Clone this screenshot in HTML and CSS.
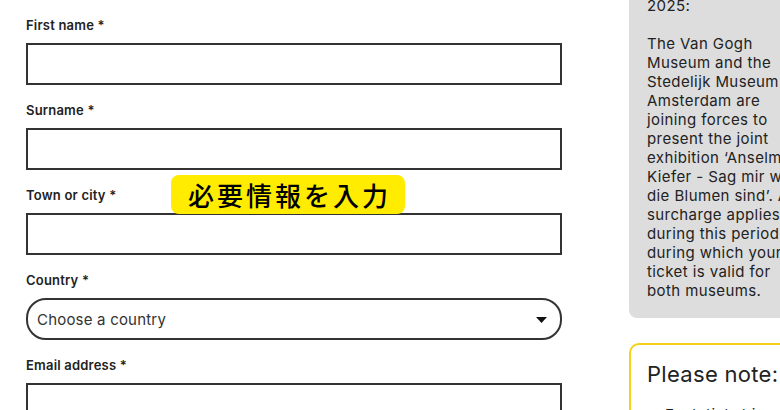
FILE: index.html
```html
<!DOCTYPE html>
<html lang="en">
<head>
<meta charset="utf-8">
<title>Ticket details</title>
<link rel="stylesheet" href="styles.css">
</head>
<body>
<div class="page">
  <form class="form">
    <div class="field">
      <label class="label">First name *</label>
      <div class="input"></div>
    </div>
    <div class="field">
      <label class="label">Surname *</label>
      <div class="input"></div>
    </div>
    <div class="field">
      <label class="label">Town or city *</label>
      <div class="input"></div>
    </div>
    <div class="field">
      <label class="label">Country *</label>
      <div class="select">
        <span class="select-text">Choose a country</span>
        <svg class="caret" width="11" height="6" viewBox="0 0 11 6"><path d="M0 0H11L5.5 6Z" fill="#111"/></svg>
      </div>
    </div>
    <div class="field">
      <label class="label">Email address *</label>
      <div class="input"></div>
    </div>
    <div class="badge">必要情報を入力</div>
  </form>
  <aside class="aside">
    <div class="info">
      <p>2025:</p>
      <p>The Van Gogh Museum and the Stedelijk Museum Amsterdam are joining forces to present the joint exhibition ‘Anselm Kiefer - Sag mir wo die Blumen sind’. A surcharge applies during this period, during which your ticket is valid for both museums.</p>
    </div>
    <div class="note">
      <h2 class="note-title">Please note:</h2>
      <ul class="note-list">
        <li>Each ticket is personal</li>
      </ul>
    </div>
  </aside>
</div>
</body>
</html>
```

FILE: styles.css
```css
html, body {
  margin: 0;
  padding: 0;
  background: #fff;
  overflow: hidden;
}
body {
  font-family: Inter, "Liberation Sans", sans-serif;
  color: #222;
  width: 780px;
  height: 410px;
}
.page {
  display: flex;
  align-items: flex-start;
  gap: 67px;
  padding-left: 26px;
  width: 900px;
}
.form {
  position: relative;
  width: 536px;
  display: flex;
  flex-direction: column;
  gap: 17px;
  padding-top: 17px;
}
.field {
  display: flex;
  flex-direction: column;
  gap: 10px;
}
.label {
  font-size: 13px;
  line-height: 16px;
  font-weight: 600;
  color: #222;
  letter-spacing: 0.2px;
}
.input {
  height: 38px;
  border: 2px solid #333;
  background: #fff;
}
.select {
  height: 38px;
  border: 2px solid #333;
  border-radius: 20px;
  display: flex;
  align-items: center;
  justify-content: space-between;
  padding: 0 13px 0 9px;
}
.select-text {
  font-size: 15px;
  color: #333;
  letter-spacing: 0.2px;
}
.caret {
  display: block;
  margin-top: 2px;
}
.badge {
  position: absolute;
  left: 145px;
  top: 175px;
  width: 234px;
  height: 39px;
  background: #ffec00;
  border-radius: 8px;
  display: flex;
  align-items: center;
  justify-content: center;
  font-family: "Noto Sans CJK JP", sans-serif;
  font-size: 26px;
  font-weight: 500;
  color: #000;
  letter-spacing: 3px;
  text-indent: 3px;
}
.aside {
  width: 191px;
  flex: none;
  margin-top: -24px;
  display: flex;
  flex-direction: column;
  gap: 25px;
}
.info {
  background: #dddddd;
  border-radius: 8px;
  padding: 20px 18px 18px;
  font-size: 15px;
  line-height: 19px;
  letter-spacing: 0.4px;
  color: #222;
}
.info p {
  margin: 0 0 19px;
}
.info p:last-child {
  margin-bottom: 0;
}
.note {
  border: 2px solid #f7d117;
  border-radius: 10px;
  padding: 16px 16px 16px;
  height: 200px;
}
.note-title {
  margin: 0;
  font-size: 22px;
  line-height: 26px;
  font-weight: 400;
  color: #222;
  letter-spacing: 0.3px;
}
.note-list {
  margin: 18px 0 0;
  padding-left: 18px;
  font-size: 15px;
  letter-spacing: 0.4px;
}
```
